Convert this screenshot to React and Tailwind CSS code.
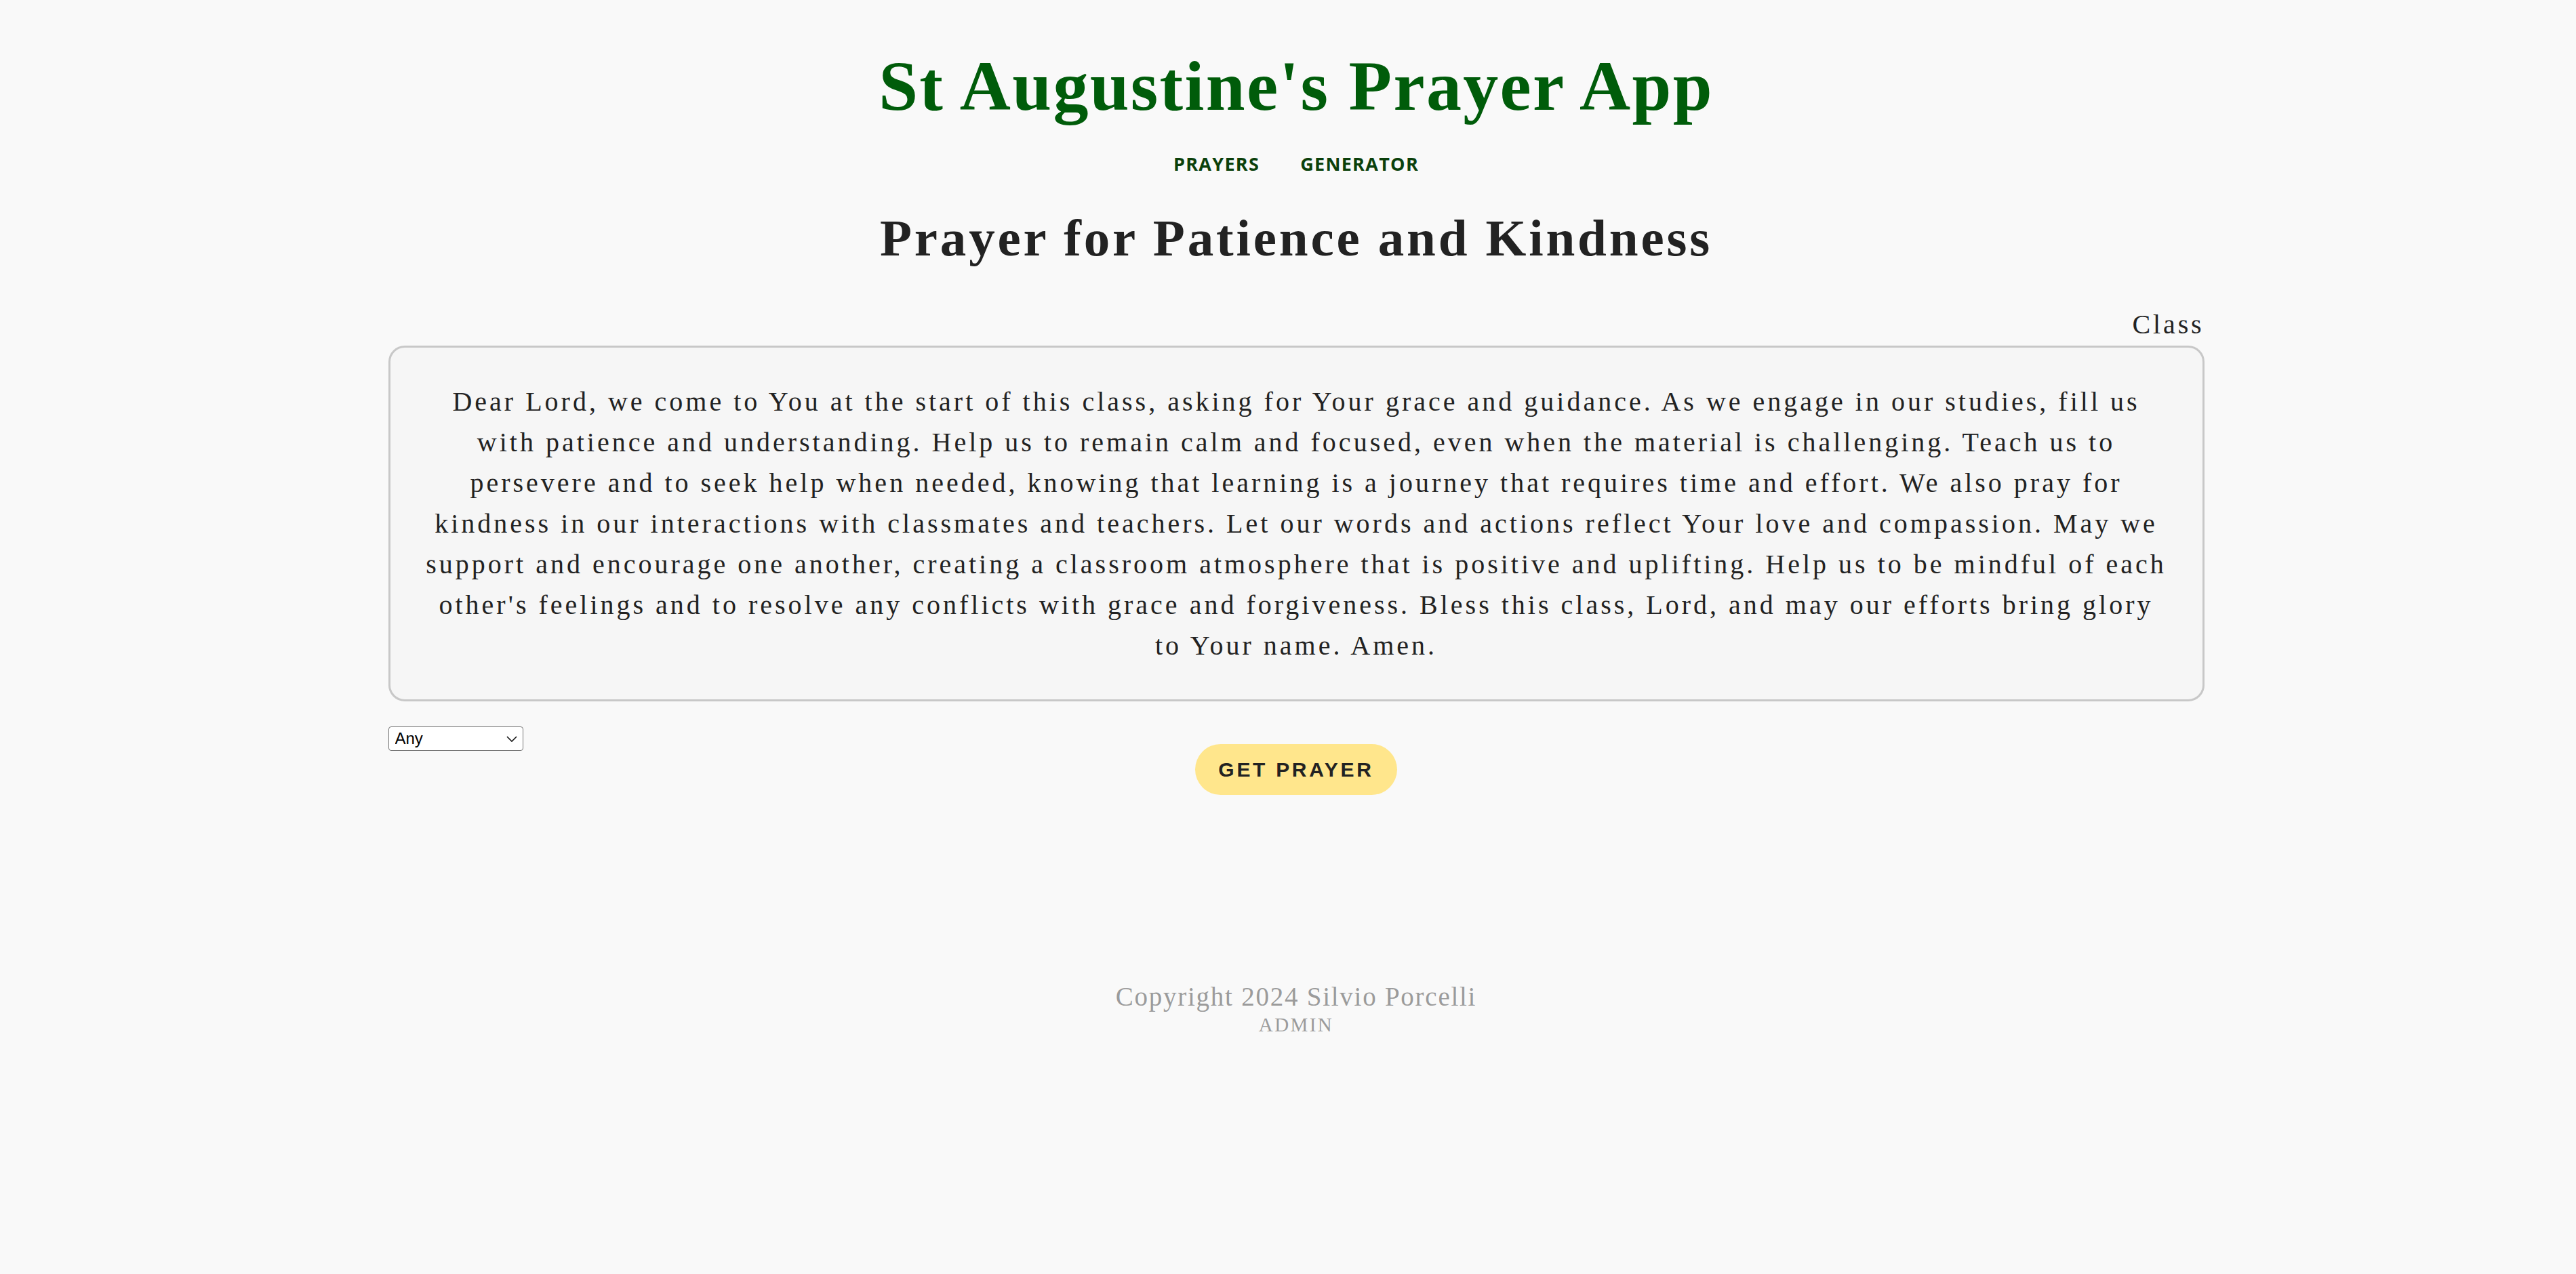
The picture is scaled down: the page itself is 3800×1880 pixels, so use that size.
import { useState } from "react";

const PRAYER =
  "Dear Lord, we come to You at the start of this class, asking for Your grace and guidance. As we engage in our studies, fill us with patience and understanding. Help us to remain calm and focused, even when the material is challenging. Teach us to persevere and to seek help when needed, knowing that learning is a journey that requires time and effort. We also pray for kindness in our interactions with classmates and teachers. Let our words and actions reflect Your love and compassion. May we support and encourage one another, creating a classroom atmosphere that is positive and uplifting. Help us to be mindful of each other's feelings and to resolve any conflicts with grace and forgiveness. Bless this class, Lord, and may our efforts bring glory to Your name. Amen.";

export default function App() {
  const [category, setCategory] = useState("any");

  return (
    <div className="min-h-screen bg-[#f9f9f9] pl-[24px] font-['Liberation_Serif',serif] text-[#222]">
      {/* HEADER */}
      <header className="flex flex-col items-center pt-[75px]">
        <h1 className="text-[104px] font-bold leading-[104px] tracking-[2.3px] text-[#005c0a]">
          St Augustine's Prayer App
        </h1>
        <nav className="mt-[49px] flex gap-[60px] font-['Open_Sans',sans-serif] text-[27px] font-bold leading-[27px] tracking-[1.3px] text-[#0b400b]">
          <a href="#">PRAYERS</a>
          <a href="#">GENERATOR</a>
        </nav>
      </header>

      {/* PRAYER */}
      <main className="mx-auto w-[2679px]">
        <h2 className="mt-[58px] text-center text-[77px] font-bold leading-[77px] tracking-[3.85px]">
          Prayer for Patience and Kindness
        </h2>
        <div className="mt-[69px] text-right text-[40px] leading-[40px] tracking-[3.85px]">
          Class
        </div>
        <div className="mt-[11px] rounded-[24px] border-[3px] border-[#c8c8c8] bg-[#f6f6f6] px-[48px] pt-[50px] pb-[49px] text-center text-[40px] leading-[60px] tracking-[4px]">
          {PRAYER}
        </div>

        {/* CONTROLS */}
        <div className="grid grid-cols-[1fr_auto_1fr]">
          <div className="relative mt-[37px] h-[36px] w-[199px] self-start">
            <select
              value={category}
              onChange={(e) => setCategory(e.target.value)}
              className="h-full w-full appearance-none rounded-[4px] border-[1.5px] border-[#767676] bg-white pl-[9px] font-['Liberation_Sans',sans-serif] text-[24px] leading-[30px] tracking-normal text-black"
            >
              <option value="any">Any</option>
              <option value="class">Class</option>
              <option value="morning">Morning</option>
              <option value="evening">Evening</option>
            </select>
            <svg
              className="pointer-events-none absolute top-[14px] right-[9px]"
              width="16"
              height="9"
              viewBox="0 0 16 9"
              fill="none"
              stroke="#111"
              strokeWidth="1.6"
            >
              <path d="M1 1l7 7 7-7" />
            </svg>
          </div>
          <button
            type="button"
            className="mt-[63px] flex h-[75px] items-center justify-center rounded-full bg-[#ffe68c] px-[34px] font-['Liberation_Sans',sans-serif] text-[30px] font-bold tracking-[3.7px] text-[#222]"
          >
            GET PRAYER
          </button>
          <div />
        </div>
      </main>

      {/* FOOTER */}
      <footer className="mt-[278px] flex flex-col items-center text-[#9b9b9b]">
        <div className="text-[39px] leading-[39px] tracking-[1.75px]">
          Copyright 2024 Silvio Porcelli
        </div>
        <a href="#" className="mt-[8px] text-[29px] leading-[29px] tracking-[2.4px]">
          ADMIN
        </a>
      </footer>
    </div>
  );
}
